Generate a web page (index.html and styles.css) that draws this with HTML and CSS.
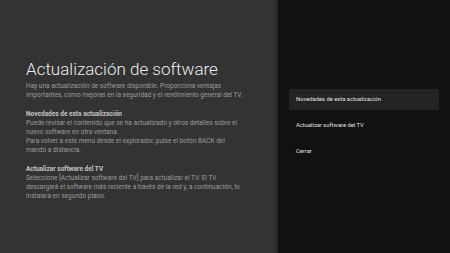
FILE: index.html
```html
<!DOCTYPE html>
<html lang="es">
<head>
  <meta charset="UTF-8" />
  <title>Actualización de software</title>
  <link rel="stylesheet" href="styles.css">
</head>
<body>

  <div class="screen">
    <section class="info">
      <h1>Actualización de software</h1>

      <p>Hay una actualización de software disponible. Proporciona ventajas importantes, como mejoras en la seguridad y el rendimiento general del TV.</p>

      <p>
        <strong>Novedades de esta actualización</strong><br>
        Puede revisar el contenido que se ha actualizado y otros detalles sobre el nuevo software en otra ventana.<br>
        Para volver a este menú desde el explorador, pulse el botón BACK del mando a distancia.
      </p>

      <p>
        <strong>Actualizar software del TV</strong><br>
        Seleccione [Actualizar software del TV] para actualizar el TV. El TV descargará el software más reciente a través de la red y, a continuación, lo instalará en segundo plano.
      </p>
    </section>

    <nav class="menu">
      <div class="item focused">Novedades de esta actualización</div>
      <div class="item">Actualizar software del TV</div>
      <div class="item">Cerrar</div>
    </nav>
  </div>

</body>
</html>
```

FILE: styles.css
```css
html, body {
  margin: 0;
  height: 100%;
}

body {
  font-family: Roboto, "Liberation Sans", sans-serif;
  background-color: #111;
}

.screen {
  display: flex;
  height: 100%;
}

.info {
  width: 219px;
  padding: 59px 30px 0 26px;
  background-color: #333;
  border-right: 3px solid #2a2a2a;
  color: #9c9c9c;
}

h1 {
  margin: 0 0 3px 0;
  font-size: 17px;
  line-height: 20px;
  font-weight: 300;
  color: #ececec;
}

.info p {
  margin: 0 0 10px 0;
  font-size: 6.5px;
  line-height: 9px;
}

.info strong {
  color: #c4c4c4;
  font-weight: 700;
}

.menu {
  flex: 1;
  display: flex;
  flex-direction: column;
  gap: 5px;
  padding: 89px 11px 0 11px;
}

.item {
  height: 21px;
  line-height: 21px;
  padding-left: 7px;
  font-size: 5.8px;
  color: #e0e0e0;
}

.item.focused {
  background-color: #232323;
}
```
